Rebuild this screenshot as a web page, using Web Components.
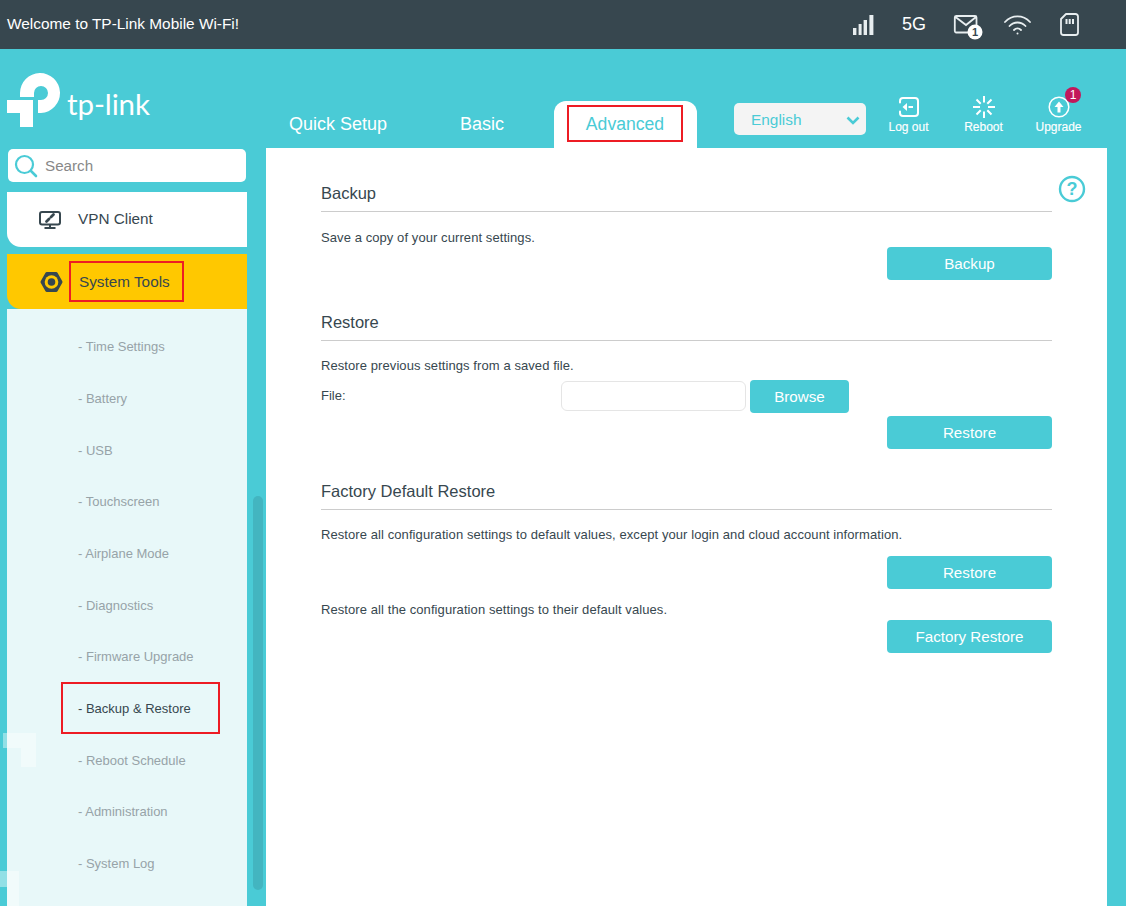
<!DOCTYPE html>
<html><head><meta charset="utf-8">
<style>
html,body{margin:0;padding:0;height:906px;overflow:hidden;background:#4acbd6;font-family:"Liberation Sans",Arial,sans-serif}
</style></head><body>
<tp-app></tp-app>
<script>
function def(name,css,html){
  customElements.define(name,class extends HTMLElement{
    constructor(){super();const r=this.attachShadow({mode:'open'});
      const fn=typeof html==='function'?html(this):html;
      r.innerHTML='<style>'+css+'</style>'+fn;}
  });
}
def('tp-status',`
:host{display:flex;align-items:center;height:49px;background:#37474f;color:#fff;box-sizing:border-box;padding-left:7px;font-size:15.4px;position:relative}
.t{flex:1;position:relative;top:-1px}
.i{display:flex;align-items:center;padding-right:47px;height:100%}
svg{display:block}
.g{font-size:18px;margin:0 28px 0 28px}
`,`<span class="t">Welcome to TP-Link Mobile Wi-Fi!</span>
<div class="i">
<svg width="21" height="20" viewBox="0 0 21 20" fill="#e8eef0"><rect x="0" y="13" width="3.4" height="7"/><rect x="5.6" y="9" width="3" height="11"/><rect x="10.6" y="5" width="3.4" height="15"/><rect x="16.4" y="0" width="4" height="20"/></svg>
<span class="g">5G</span>
<svg width="33" height="28" viewBox="0 0 33 28" style="margin-top:8px;margin-right:17px;overflow:visible"><path d="M2 1h19a1.5 1.5 0 0 1 1.5 1.5V11M14 17.500H2A1.500 1.500 0 0 1 .8 16V2.500A1.500 1.500 0 0 1 2 1M1.500 2l10.500 8 10-8" fill="none" stroke="#e8eef0" stroke-width="1.800"/><circle cx="21" cy="17" r="7.500" fill="#fff"/><text x="21" y="21" text-anchor="middle" font-size="11" font-weight="700" fill="#37474f" font-family="Liberation Sans">1</text></svg>
<svg width="27" height="20" viewBox="0 0 27 20" fill="none" stroke="#e8eef0" stroke-width="1.800" stroke-linecap="round"><path d="M1 7C8-.6 19-.6 26 7"/><path d="M5.500 11c4.500-4.700 11.500-4.700 16 0"/><path d="M10 15c2-2 5-2 7 0"/><circle cx="13.500" cy="18.500" r="1" fill="#e8eef0" stroke="none"/></svg>
<svg width="19" height="23" viewBox="0 0 19 23" fill="none" style="margin-left:29px"><path d="M6 1h9.500A2.500 2.500 0 0 1 18 3.500v16a2.500 2.500 0 0 1-2.500 2.500h-12A2.500 2.500 0 0 1 1 19.500V6z" stroke="#e8eef0" stroke-width="1.800" stroke-linejoin="round"/><rect x="5.500" y="6" width="2" height="5" fill="#e8eef0"/><rect x="8.700" y="6" width="2" height="5" fill="#e8eef0"/><rect x="12" y="6" width="2" height="5" fill="#e8eef0"/></svg>
</div>`);

def('tp-logo',`
:host{display:flex;width:266px;flex:none;align-items:flex-start;padding:24px 0 0 7px;box-sizing:border-box;color:#fff}
svg{display:block;flex:none}
span{font-family:"Lato","Open Sans",sans-serif;font-size:29.5px;font-weight:400;letter-spacing:-.1px;line-height:30px;margin:16px 0 0 6px}
`,`<svg width="54" height="54" viewBox="0 0 54 54" fill="#fff"><path d="M13 54V40H0V27H26V54ZM13 20A20 20 0 1 1 34 40H31V27H34A7 7 0 1 0 27 20V24H13Z"/></svg><span>tp-link</span>`);

def('tp-tabs',`
:host{display:flex;align-items:flex-end;height:99px;flex:none;color:#fff;font-size:18px;white-space:nowrap}
a{display:block;text-align:center;padding-bottom:14px;line-height:20px}
.adv{width:143px;height:47px;background:#fff;border-radius:12px 12px 0 0;color:#4acbd6;box-sizing:border-box;padding:4px 0 0 13px;font-size:17.6px}
.box{border:2px solid #ed1c24;width:116px;height:37px;box-sizing:border-box;display:flex;align-items:center;justify-content:center;padding-top:1px}
`,`<a style="margin-left:23px;width:96px">Quick Setup</a><a style="margin-left:75px;width:44px">Basic</a><div class="adv" style="margin-left:50px"><div class="box">Advanced</div></div>`);

def('tp-tools',`
:host{display:flex;height:99px;flex:none;position:relative;color:#fff;margin-left:37px}
.sel{width:132px;height:32px;margin-top:54px;background:#f4f4f4;border-radius:5px;color:#4acbd6;font-size:15.4px;display:flex;align-items:center;justify-content:space-between;padding:2px 6px 0 17px;box-sizing:border-box}
.tool{width:75px;display:flex;flex-direction:column;align-items:center;font-size:12px;margin-top:46px;position:relative}
.tool svg{display:block;height:24px}
.tool span{margin-top:1px;line-height:14px;font-size:12px;-webkit-text-stroke:.15px #fff}
.bd{position:absolute;left:44px;top:-8px;width:16px;height:16px;border-radius:50%;background:#c2185b;font-size:12px;display:flex;align-items:center;justify-content:center;line-height:16px;font-style:normal}
`,`<div class="sel">English<svg width="14" height="9" viewBox="0 0 14 9" fill="none" stroke="#4acbd6" stroke-width="2.600"><path d="M1.500 1.500L7 7l5.500-5.500"/></svg></div>
<div class="tool" style="margin-left:5px"><svg width="24" height="24" viewBox="0 0 24 24" fill="none" stroke="#fff" stroke-linecap="round"><path d="M3 7.500V6a3 3 0 0 1 3-3h12a3 3 0 0 1 3 3v12a3 3 0 0 1-3 3H6a3 3 0 0 1-3-3v-1.500" stroke-width="2"/><path d="M5.500 12l4.500-4v8z" fill="#fff" stroke="none"/><path d="M11.500 12h4.500" stroke-width="2" stroke-linecap="butt"/></svg><span>Log out</span></div>
<div class="tool"><svg width="24" height="24" viewBox="0 0 24 24" fill="none" stroke="#fff" stroke-width="2"><path d="M12 1v6.500M12 16.500V23M1 12h7M16 12h7M4.500 4.500l4.200 4.200M15.300 15.300l4.200 4.200M19.500 4.500l-4.200 4.200M8.700 15.300l-4.200 4.200"/></svg><span>Reboot</span></div>
<div class="tool"><svg width="24" height="24" viewBox="0 0 24 24" fill="none"><circle cx="12" cy="12" r="9.800" stroke="#fff" stroke-width="1.500"/><path d="M12 6.500L16.500 12H13.500V17.500H10.500V12H7.500Z" fill="#fff"/></svg><span>Upgrade</span><i class="bd">1</i></div>`);

def('tp-header',`
:host{display:flex;height:99px;flex:none}
`,`<tp-logo></tp-logo><tp-tabs></tp-tabs><tp-tools></tp-tools>`);

def('tp-search',`
:host{display:flex;align-items:center;height:33px;margin:1px 1px 0 1px;background:#fff;border-radius:5px;color:#888;font-size:15.2px;gap:7px;padding-left:6px}
svg{display:block}
`,`<svg width="24" height="24" viewBox="0 0 24 24" fill="none" stroke="#4acbd6" stroke-width="2.200" stroke-linecap="round"><circle cx="10.500" cy="10.500" r="8.500"/><path d="M17 17l5 5" stroke-width="2.600"/></svg><span>Search</span>`);

def('tp-main-item',`
:host{display:flex;align-items:center;height:55px;background:#fff;border-radius:0 0 0 14px;color:#37474f;font-size:15.3px;box-sizing:border-box}
:host([active]){background:#ffc800}
.ic{display:flex;flex:none}
svg{display:block}
.box{border:2px solid #ed1c24;display:flex;align-items:center;height:41px;box-sizing:border-box;width:115px;padding-left:8px}
`,t=>t.hasAttribute('active')?`<div class="ic" style="width:62px;padding-left:33px;box-sizing:border-box"><slot name="icon"></slot></div><div class="box"><slot></slot></div>`:`<div class="ic" style="width:71px;padding-left:32px;box-sizing:border-box"><slot name="icon"></slot></div><div style="position:relative;top:-1px"><slot></slot></div>`);

def('tp-sub-item',`
:host{display:flex;align-items:center;height:51.68px;padding-left:71px;color:#97a3a8;font-size:13px;position:relative}
:host([current]){color:#37474f}
.box{position:absolute;left:54px;top:-1px;width:159px;height:52px;border:2px solid #ed1c24;box-sizing:border-box}
`,t=>`<slot></slot>`+(t.hasAttribute('current')?'<div class="box"></div>':''));

def('tp-sidebar',`
:host{display:flex;flex-direction:column;width:266px;flex:none;padding-left:7px;box-sizing:border-box;position:relative;height:758px;overflow:hidden}
.col{width:240px;display:flex;flex-direction:column;flex:1;min-height:0}
.sub{flex:1;background:#e8f8f9;padding-top:12px}
.gap1{height:10px}.gap2{height:7px}
.bar{position:absolute;left:253px;top:348px;width:10px;height:394px;background:#43b5c0;border-radius:5px}
.w{position:absolute;background:rgba(255,255,255,.4);z-index:1}
svg{display:block}
`,`<div class="w" style="left:3px;top:585px;width:33px;height:15px"></div><div class="w" style="left:21px;top:600px;width:15px;height:19px"></div>
<div class="w" style="left:0;top:723px;width:19px;height:16px"></div><div class="w" style="left:7px;top:739px;width:12px;height:19px"></div>
<div class="col">
<tp-search></tp-search>
<div class="gap1"></div>
<tp-main-item><svg slot="icon" width="22" height="18" viewBox="0 0 22 18" fill="none" stroke="#37474f"><rect x="1" y="1" width="20" height="12.500" rx="2" stroke-width="2"/><path d="M11 14v3M5.500 17h11" stroke-width="2"/><path d="M7.500 10.500l2.500-2.500M12 6l2.500-2.500" stroke-width="2.800" stroke-linecap="round"/><path d="M9.500 8.500l3-3" stroke-width="1.200"/></svg>VPN Client</tp-main-item>
<div class="gap2"></div>
<tp-main-item active><svg slot="icon" width="23" height="22" viewBox="0 0 23 22"><path d="M2 11L6.800 2.500H16.200L21 11L16.200 19.500H6.800Z" fill="#37474f" stroke="#37474f" stroke-width="3" stroke-linejoin="round"/><circle cx="11.500" cy="11" r="6.800" fill="#ffc800"/><circle cx="11.500" cy="11" r="3.800" fill="#37474f"/></svg>System Tools</tp-main-item>
<div class="sub">
<tp-sub-item>- Time Settings</tp-sub-item>
<tp-sub-item>- Battery</tp-sub-item>
<tp-sub-item>- USB</tp-sub-item>
<tp-sub-item>- Touchscreen</tp-sub-item>
<tp-sub-item>- Airplane Mode</tp-sub-item>
<tp-sub-item>- Diagnostics</tp-sub-item>
<tp-sub-item>- Firmware Upgrade</tp-sub-item>
<tp-sub-item current>- Backup &amp; Restore</tp-sub-item>
<tp-sub-item>- Reboot Schedule</tp-sub-item>
<tp-sub-item>- Administration</tp-sub-item>
<tp-sub-item>- System Log</tp-sub-item>
</div></div><div class="bar"></div>`);

def('tp-btn',`
:host{display:flex;align-items:center;justify-content:center;width:165px;height:33px;background:#4acbd6;color:#fff;border-radius:4px;font-size:15.2px;flex:none}
`,`<slot></slot>`);

def('tp-section',`
:host{display:block}
h2{font-weight:400;font-size:16.5px;color:#37474f;margin:0;height:33px;line-height:30px;border-bottom:1px solid #ccc}
`,t=>`<h2>${t.getAttribute('title')}</h2><slot></slot>`);

def('tp-para',`
:host{display:block;font-size:13px;color:#37474f;letter-spacing:.08px;line-height:14px}
`,`<slot></slot>`);

def('tp-right',`
:host{display:flex;justify-content:flex-end}
`,`<slot></slot>`);

def('tp-file',`
:host{display:flex;align-items:flex-start;font-size:13px;color:#37474f;height:33px}
.l{width:240px;line-height:31px}
.i{width:185px;height:30px;border:1px solid #e5e5e5;border-radius:6px;box-sizing:border-box;margin:1px 4px 0 0}
`,`<span class="l">File:</span><div class="i"></div><tp-btn style="width:99px">Browse</tp-btn>`);

def('tp-panel',`
:host{display:block;width:841px;flex:none;background:#fff;height:758px;box-sizing:border-box;padding:30px 55px 0 55px;position:relative}
.help{position:absolute;left:792px;top:27px}
`,`<svg class="help" width="28" height="28" viewBox="0 0 28 28" fill="none"><circle cx="14" cy="14" r="12" stroke="#4acbd6" stroke-width="2.400"/><text x="14" y="20" text-anchor="middle" font-size="18" font-weight="700" fill="#4acbd6" font-family="Liberation Sans">?</text></svg>
<tp-section title="Backup">
<tp-para style="margin-top:19px">Save a copy of your current settings.</tp-para>
<tp-right style="margin-top:2px"><tp-btn>Backup</tp-btn></tp-right>
</tp-section>
<tp-section title="Restore" style="margin-top:27px">
<tp-para style="margin-top:18px">Restore previous settings from a saved file.</tp-para>
<tp-file style="margin-top:7px"></tp-file>
<tp-right style="margin-top:3px"><tp-btn>Restore</tp-btn></tp-right>
</tp-section>
<tp-section title="Factory Default Restore" style="margin-top:27px">
<tp-para style="margin-top:18px">Restore all configuration settings to default values, except your login and cloud account information.</tp-para>
<tp-right style="margin-top:14px"><tp-btn>Restore</tp-btn></tp-right>
<tp-para style="margin-top:14px">Restore all the configuration settings to their default values.</tp-para>
<tp-right style="margin-top:3px"><tp-btn>Factory Restore</tp-btn></tp-right>
</tp-section>`);

def('tp-app',`
:host{display:block;width:1126px;height:906px;overflow:hidden;background:#4acbd6}
.row{display:flex}
`,`<tp-status></tp-status><tp-header></tp-header><div class="row"><tp-sidebar></tp-sidebar><tp-panel></tp-panel></div>`);
</script>
</body></html>
